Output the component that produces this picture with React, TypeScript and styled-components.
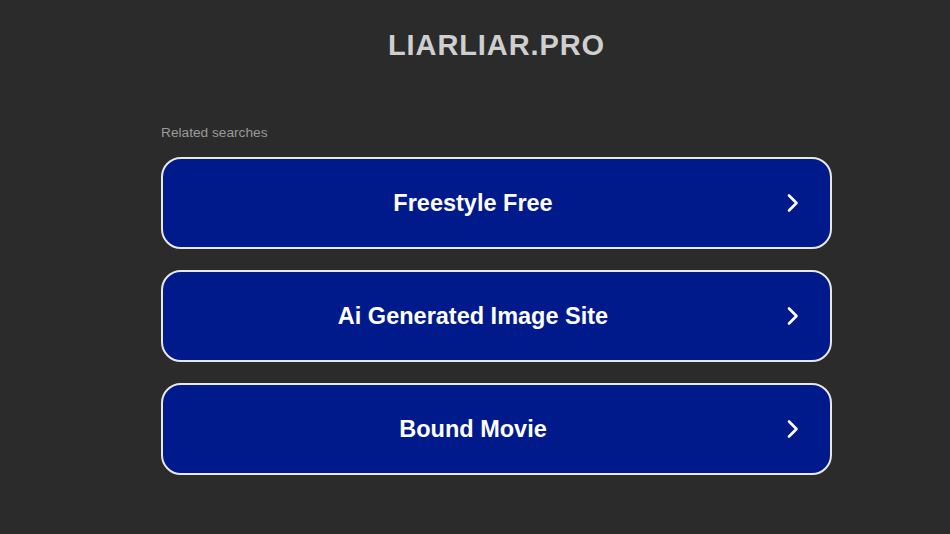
import React from "react";
import styled, { createGlobalStyle } from "styled-components";

const Global = createGlobalStyle`
  html, body { margin: 0; padding: 0; background: #2b2b2b; }
  body { font-family: Arial, "Liberation Sans", Helvetica, sans-serif; }
`;

const Page = styled.div`
  min-height: 534px;
  background: #2b2b2b;
  display: flex;
  flex-direction: column;
  align-items: center;
  padding-left: 43px;
  box-sizing: border-box;
`;

const Domain = styled.h1`
  margin: 29px 0 0;
  font-size: 29px;
  font-weight: bold;
  color: #cfcfcf;
  letter-spacing: 0.9px;
  line-height: 32px;
`;

const Section = styled.section`
  width: 671px;
  margin-top: 64px;
  display: flex;
  flex-direction: column;
`;

const Label = styled.div`
  font-size: 13.7px;
  color: #9a9a9a;
  line-height: 16px;
  margin-bottom: 16px;
`;

const List = styled.div`
  display: flex;
  flex-direction: column;
  gap: 21px;
`;

const Link = styled.a`
  height: 92px;
  box-sizing: border-box;
  border: 2px solid #e8e8e8;
  border-radius: 20px;
  background: #011a8b;
  display: grid;
  grid-template-columns: 1fr 47px;
  align-items: center;
  text-decoration: none;
  color: #ffffff;
  cursor: pointer;
`;

const Text = styled.span`
  text-align: center;
  font-size: 23.5px;
  font-weight: bold;
`;

const Arrow = styled.span`
  display: flex;
  align-items: center;
  padding-left: 3px;
`;

const Chevron = () => (
  <svg width="14" height="20" viewBox="0 0 14 20" fill="none">
    <path d="M3 2.5 L10.5 10 L3 17.5" stroke="#ffffff" strokeWidth="2.6" strokeLinecap="round" strokeLinejoin="round" />
  </svg>
);

const items = ["Freestyle Free", "Ai Generated Image Site", "Bound Movie"];

export default function App() {
  return (
    <>
      <Global />
      <Page>
        <Domain>LIARLIAR.PRO</Domain>
        <Section>
          <Label>Related searches</Label>
          <List>
            {items.map((t) => (
              <Link key={t}>
                <Text>{t}</Text>
                <Arrow>
                  <Chevron />
                </Arrow>
              </Link>
            ))}
          </List>
        </Section>
      </Page>
    </>
  );
}
